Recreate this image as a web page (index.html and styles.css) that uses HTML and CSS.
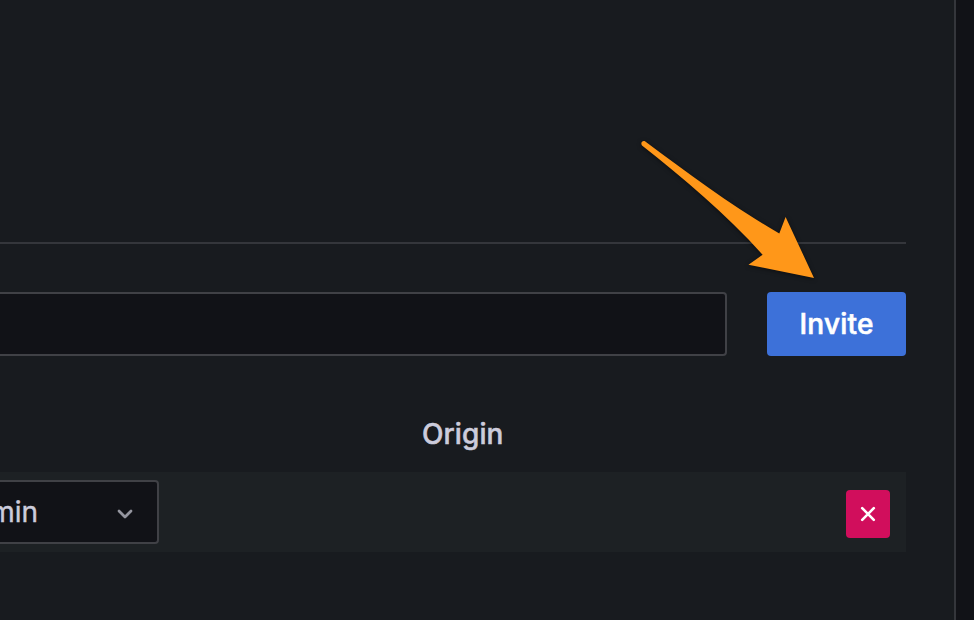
FILE: index.html
```html
<!DOCTYPE html>
<html lang="en">
<head>
<meta charset="utf-8">
<title>Permissions</title>
<link rel="stylesheet" href="styles.css">
</head>
<body>
<main class="panel">
  <hr class="divider">
  <form class="invite-row">
    <input class="invite-input" type="text" aria-label="Invite">
    <button class="invite-button" type="button">Invite</button>
  </form>
  <div class="table-head"><span>Origin</span></div>
  <div class="table-row">
    <div class="role-select">
      <span class="role-name">min</span>
      <svg class="chevron" width="16" height="10" viewBox="0 0 16 10"><path d="M2 2L8 8L14 2"/></svg>
    </div>
    <button class="remove-button" type="button" aria-label="Remove">
      <svg width="16" height="16" viewBox="0 0 16 16"><path d="M2.2 2.2L13.8 13.8M13.8 2.2L2.2 13.8"/></svg>
    </button>
  </div>
</main>
<svg class="arrow" width="200" height="160" viewBox="0 0 200 160"><path d="M15.3 11.6C60 45 105 78 149.3 103.5L155.6 87L184 148L118.5 134.7L132.6 124.8C96 84 53 48 12 15.6C10 12.5 13 10 15.3 11.6Z"/></svg>
</body>
</html>
```
FILE: styles.css
```css
* {
  box-sizing: border-box;
}

body {
  margin: 0;
  height: 620px;
  overflow: hidden;
  background: #111217;
  font-family: Inter, "Liberation Sans", sans-serif;
  color: #ccccdc;
}

.panel {
  width: 956px;
  height: 620px;
  padding: 242px 48px 0 0;
  background: #181b1f;
  border-right: 2px solid #34363b;
  overflow: hidden;
}

.divider {
  height: 2px;
  margin: 0 0 48px;
  border: 0;
  background: #34363b;
}

.invite-row {
  display: flex;
  gap: 40px;
  height: 64px;
}

.invite-input {
  flex: 1;
  min-width: 0;
  padding: 0 16px;
  margin-left: -8px;
  background: #111217;
  border: 2px solid #404146;
  border-radius: 4px;
}

.invite-button {
  width: 139px;
  padding: 0;
  border: 0;
  border-radius: 4px;
  background: #3d71d9;
  color: #fff;
  font: 500 28px/64px Inter, "Liberation Sans", sans-serif;
  letter-spacing: 0.2px;
  -webkit-text-stroke: 0.6px #fff;
}

.table-head {
  height: 116px;
  padding: 60px 0 0 422px;
  font-size: 28px;
  font-weight: 500;
  line-height: 36px;
  letter-spacing: 0.1px;
  -webkit-text-stroke: 0.5px #ccccdc;
}

.table-row {
  display: flex;
  align-items: center;
  justify-content: space-between;
  height: 80px;
  padding-right: 16px;
  background: #1d2124;
}

.role-select {
  display: flex;
  align-items: center;
  justify-content: flex-end;
  width: 167px;
  height: 64px;
  margin-left: -8px;
  padding-right: 24px;
  background: #111217;
  border: 2px solid #404146;
  border-radius: 4px;
}

.role-name {
  margin-right: 79px;
  font-size: 28px;
  -webkit-text-stroke: 0.4px #ccccdc;
}

.chevron {
  flex: none;
  margin-top: 4px;
}

.chevron path {
  fill: none;
  stroke: #94959f;
  stroke-width: 2.8;
  stroke-linecap: round;
  stroke-linejoin: round;
}

.remove-button {
  display: flex;
  align-items: center;
  justify-content: center;
  width: 44px;
  height: 48px;
  margin-top: 4px;
  padding: 0;
  border: 0;
  border-radius: 4px;
  background: #d10e5c;
}

.remove-button path {
  stroke: #fff;
  stroke-width: 2.6;
  stroke-linecap: round;
}

.arrow {
  position: absolute;
  left: 630px;
  top: 130px;
  overflow: visible;
  fill: #ff9719;
  filter: drop-shadow(0 1px 2px rgba(0, 0, 0, 0.5));
}
```
